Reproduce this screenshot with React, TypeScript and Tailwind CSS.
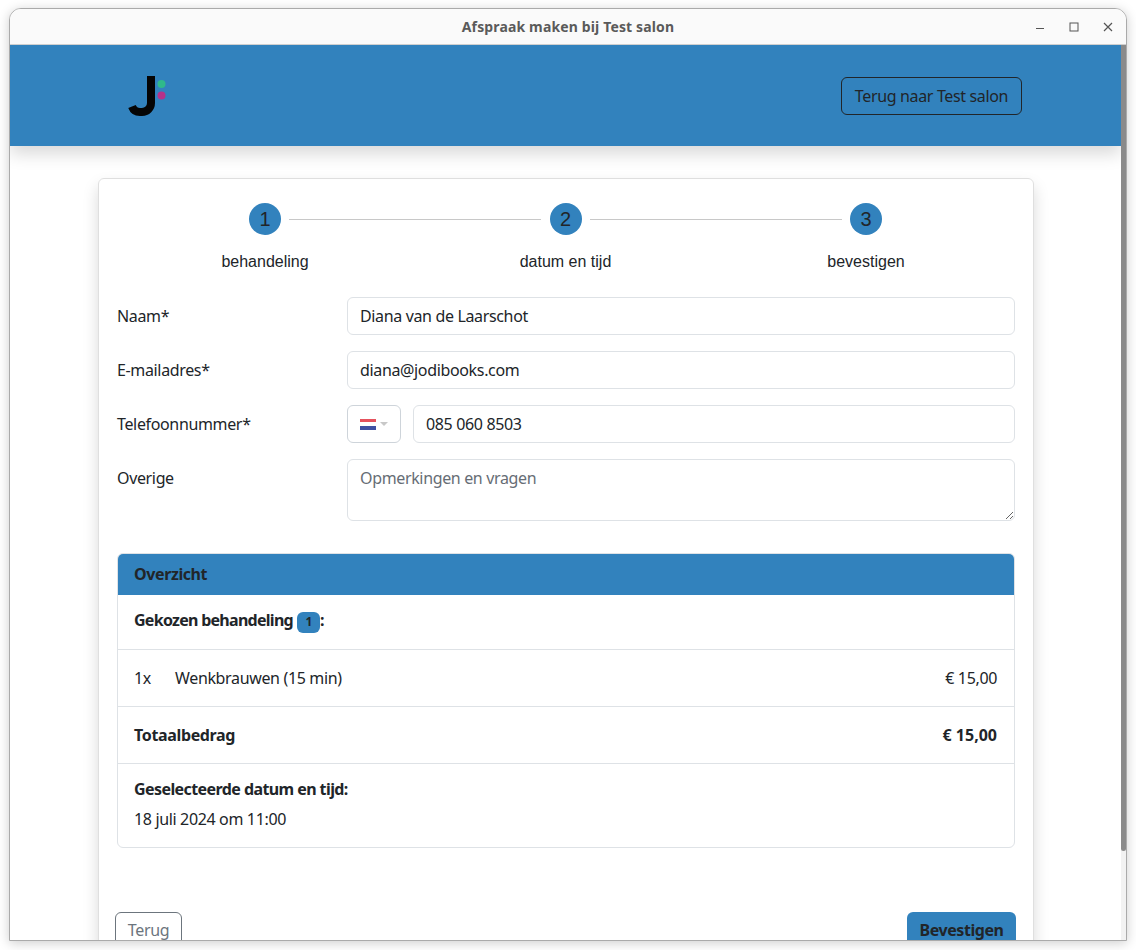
const textColor = "text-[#212529]";

const Logo = () => (
  <svg width="42" height="44" viewBox="0 0 42 44" className="block mt-[5px]">
    <path d="M23 0V27a9 9 0 0 1-9 9h-2a8.500 8.500 0 0 1-8-5.500" fill="none" stroke="#050505" strokeWidth="8" />
    <circle cx="33.5" cy="8" r="4" fill="#2fb98a" />
    <circle cx="33.5" cy="19.5" r="4" fill="#b5338a" />
  </svg>
);

const Step = ({ n, label }: { n: number; label: string }) => (
  <div className="w-[200px] flex flex-col items-center font-['Liberation_Sans',sans-serif] tracking-normal">
    <div className="w-8 h-8 rounded-full bg-[#3282bd] flex items-center justify-center text-[20px]">{n}</div>
    <div className="mt-[15px] text-base leading-6">{label}</div>
  </div>
);

const Row = ({ label, children }: { label: string; children: React.ReactNode }) => (
  <div className="flex mb-4">
    <label className="w-[230px] pt-[7px] leading-6 shrink-0">{label}</label>
    <div className="flex-1 flex gap-3">{children}</div>
  </div>
);

const inputCls = "w-full h-[38px] px-3 border border-[#dee2e6] rounded-md bg-white outline-none text-[#212529] tracking-[-0.35px]";

const Flag = () => (
  <div className="w-4 h-[11px] flex flex-col">
    <div className="flex-1 bg-[#e5525d]" />
    <div className="flex-1 bg-white" />
    <div className="flex-1 bg-[#3f51a3]" />
  </div>
);

export default function App() {
  return (
    <div className={`h-[950px] overflow-hidden bg-white pt-2 pl-[9px] font-['Noto_Sans',sans-serif] text-base tracking-[-0.35px] ${textColor}`}>
      <div className="w-[1118px] h-[933px] border border-[#aaaaaa] rounded-t-[12px] overflow-hidden flex flex-col bg-white shadow-[0_2px_12px_rgba(0,0,0,0.2)]">
        <div className="h-9 shrink-0 flex items-center justify-center relative bg-[#fafafa] border-b border-[#cfcfcf]">
          <span className="text-sm font-bold text-[#5a5a5a] tracking-[0.14px]">Afspraak maken bij Test salon</span>
          <div className="absolute right-0 top-0 h-full flex items-center text-[#555555]">
            <svg width="12" height="12" viewBox="0 0 12 12" className="mr-[22px]">
              <path d="M2 7.5h8" stroke="currentColor" strokeWidth="1" />
            </svg>
            <svg width="12" height="12" viewBox="0 0 12 12" className="mr-[22px]">
              <rect x="2" y="2" width="8" height="8" fill="none" stroke="currentColor" strokeWidth="1" />
            </svg>
            <svg width="12" height="12" viewBox="0 0 12 12" className="mr-3">
              <path d="M2 2l8 8M10 2l-8 8" stroke="currentColor" strokeWidth="1.2" />
            </svg>
          </div>
        </div>

        <div className="flex flex-1 min-h-0">
          <div className="w-[1111px] overflow-hidden">
            <header className="h-[101px] bg-[#3282bd] flex items-center justify-between pl-[118px] pr-[99px] shadow-[0_8px_16px_rgba(0,0,0,0.15)] relative">
              <Logo />
              <button className="h-[38px] w-[181px] border border-[#212529] rounded-md text-base">Terug naar Test salon</button>
            </header>

            <main className="w-[936px] ml-[88px] mt-8 h-[900px] border border-[#dfdfdf] rounded-md shadow-[0_8px_16px_rgba(0,0,0,0.15)] px-[18px] pt-6">
              <div className="relative flex justify-between pl-[48px] pr-[49px] mb-[23px]">
                <Step n={1} label="behandeling" />
                <Step n={2} label="datum en tijd" />
                <Step n={3} label="bevestigen" />
                <div className="absolute left-[172px] top-4 w-[252px] h-px bg-[#c8c8c8]" />
                <div className="absolute left-[473px] top-4 w-[252px] h-px bg-[#c8c8c8]" />
              </div>

              <Row label="Naam*">
                <input className={inputCls} defaultValue="Diana van de Laarschot" />
              </Row>
              <Row label="E-mailadres*">
                <input className={inputCls} defaultValue="diana@jodibooks.com" />
              </Row>
              <Row label="Telefoonnummer*">
                <div className="w-[54px] h-[38px] shrink-0 border border-[#ced4da] rounded-md flex items-center pl-3 gap-1">
                  <Flag />
                  <div className="w-0 h-0 border-x-4 border-x-transparent border-t-[4px] border-t-[#c8c8c8]" />
                </div>
                <input className={inputCls} defaultValue="085 060 8503" />
              </Row>
              <Row label="Overige">
                <textarea
                  className="w-full h-[62px] px-3 py-[6px] border border-[#dee2e6] rounded-md outline-none tracking-[-0.35px] placeholder:text-[#666d75]"
                  placeholder="Opmerkingen en vragen"
                />
              </Row>

              <section className="mt-8 border border-[#dee2e6] rounded-md overflow-hidden">
                <div className="h-[41px] bg-[#3282bd] flex items-center px-4 pb-[2px] font-bold tracking-[-0.4px]">Overzicht</div>
                <div className="h-[55px] flex items-center px-4 pb-1 font-bold tracking-[-0.72px] border-b border-[#dee2e6]">
                  Gekozen behandeling
                  <span className="ml-1 mt-1 w-[23px] h-[21px] rounded-md bg-[#3282bd] flex items-center justify-center text-xs font-bold">1</span>:
                </div>
                <div className="h-[57px] flex items-center pl-4 pr-[17px] border-b border-[#dee2e6]">
                  <span className="w-[41px]">1x</span>
                  <span>Wenkbrauwen (15 min)</span>
                  <span className="ml-auto">€ 15,00</span>
                </div>
                <div className="h-[57px] flex items-center justify-between pl-4 pr-[17px] font-bold tracking-[-0.35px] border-b border-[#dee2e6]">
                  <span>Totaalbedrag</span>
                  <span className="tracking-normal">€ 15,00</span>
                </div>
                <div className="h-[83px] px-4 pt-[13px]">
                  <div className="font-bold tracking-[-0.58px] leading-6">Geselecteerde datum en tijd:</div>
                  <div className="mt-[6px] leading-6">18 juli 2024 om 11:00</div>
                </div>
              </section>

              <div className="flex justify-between mt-[64px] -ml-[2px] -mr-[1px]">
                <button className="h-[38px] w-[67px] pb-[2px] border border-[#6c757d] rounded-md text-[#6c757d]">Terug</button>
                <button className="h-[38px] w-[109px] pb-[2px] bg-[#3282bd] rounded-md font-bold tracking-[-0.45px]">Bevestigen</button>
              </div>
            </main>
          </div>
          <div className="w-[5px] bg-[#f2f2f2]">
            <div className="h-[806px] bg-[#8a8a8a] rounded-b-sm" />
          </div>
        </div>
      </div>
    </div>
  );
}
